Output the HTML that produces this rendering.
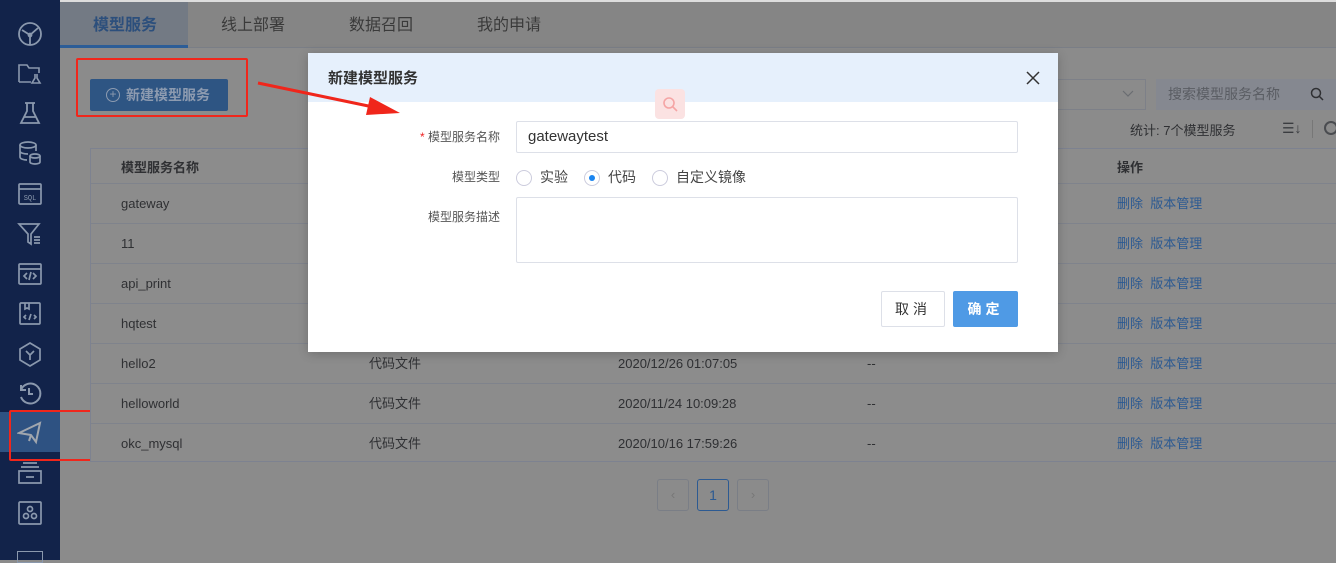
<!DOCTYPE html>
<html><head><meta charset="utf-8"><style>
*{margin:0;padding:0;box-sizing:border-box}
body{width:1336px;height:560px;overflow:hidden;background:#8b8b8b;font-family:"Liberation Sans","Noto Sans CJK SC",sans-serif;position:relative;font-size:13px;color:#2d2f33}
.a{position:absolute}
.side{left:0;top:0;width:60px;height:560px;background:#12234a}
.ic{position:absolute;left:17px;width:26px;height:26px}
.tabs{left:60px;top:2px;width:1276px;height:46px;background:#858585;border-bottom:1px solid #7a7e86}
.tab{position:absolute;top:14px;font-size:16px;line-height:20px;color:#3a3a3a}
.tbl{left:90px;top:148px;width:1246px;height:314px;border:1px solid #7d8290;border-right:none;background:#8c8c8c}
.row{position:absolute;left:0;width:100%;height:40px;border-top:1px solid #7f838c}
.row span{position:absolute;top:12px;font-size:13px;line-height:16px;color:#2f3033}
.op{color:#2c5a92!important}
.modal{left:308px;top:53px;width:750px;height:299px;background:#fff;box-shadow:0 2px 10px rgba(0,0,0,.2)}
.lbl{position:absolute;font-size:12px;line-height:16px;color:#555;text-align:right;width:120px;left:72px}
.radio{position:absolute;top:117px;width:16px;height:16px;border:1px solid #ccd;border-radius:50%}
</style></head><body>
<div class="a side">
<svg class="ic" style="top:21px" viewBox="0 0 26 26" fill="none" stroke="#8a98ad" stroke-width="1.8"><circle cx="13" cy="13" r="11"/><path d="M5 9l8 5 8-7M13 14v10"/><circle cx="13" cy="14" r="1.5" fill="#8a98ad"/></svg>
<svg class="ic" style="top:60px" viewBox="0 0 26 26" fill="none" stroke="#8a98ad" stroke-width="1.6"><path d="M2 22V5h8l2 3h10v5M2 22h12"/><path d="M18 14v4l-3 5h8l-3-5v-4"/></svg>
<svg class="ic" style="top:100px" viewBox="0 0 26 26" fill="none" stroke="#8a98ad" stroke-width="1.8"><path d="M8 3h10M10 3v8L4 23h18l-6-12V3M7 17h12"/></svg>
<svg class="ic" style="top:140px" viewBox="0 0 26 26" fill="none" stroke="#8a98ad" stroke-width="1.7"><ellipse cx="11" cy="5" rx="8" ry="3"/><path d="M3 5v12c0 2 4 3 7 3M19 5v6M3 11c0 2 4 3 8 3"/><ellipse cx="18" cy="16" rx="5" ry="2"/><path d="M13 16v6c0 1 2 2 5 2s5-1 5-2v-6"/></svg>
<svg class="ic" style="top:181px" viewBox="0 0 26 26" fill="none" stroke="#8a98ad" stroke-width="1.7"><rect x="2" y="3" width="22" height="20" rx="1"/><path d="M2 8h22"/><text x="13" y="19" font-size="7" text-anchor="middle" fill="#8a98ad" stroke="none" font-family="Liberation Mono">SQL</text></svg>
<svg class="ic" style="top:221px" viewBox="0 0 26 26" fill="none" stroke="#8a98ad" stroke-width="1.7"><path d="M2 3h20l-8 10v10l-3-2v-8z"/><path d="M17 16h6M17 19h6M17 22h6"/></svg>
<svg class="ic" style="top:261px" viewBox="0 0 26 26" fill="none" stroke="#8a98ad" stroke-width="1.7"><rect x="2" y="3" width="22" height="20" rx="1"/><path d="M2 8h22M10 12l-3 3 3 3M16 12l3 3-3 3M14 11l-2 8"/></svg>
<svg class="ic" style="top:301px" viewBox="0 0 26 26" fill="none" stroke="#8a98ad" stroke-width="1.7"><rect x="3" y="2" width="20" height="21" rx="1"/><path d="M8 2v6l2-1 2 1V2M9 14l-2 2 2 2M17 14l2 2-2 2M14 13l-2 6"/></svg>
<svg class="ic" style="top:341px" viewBox="0 0 26 26" fill="none" stroke="#8a98ad" stroke-width="1.7"><path d="M13 2l10 6v11l-10 6-10-6V8z"/><path d="M9 10l4 4 4-4M13 14v5"/></svg>
<svg class="ic" style="top:380px" viewBox="0 0 26 26" fill="none" stroke="#8a98ad" stroke-width="2"><path d="M4 10a10 10 0 1 1 0 7M4 5v5h5M12 8v6h4"/></svg>
<div class="a" style="left:0;top:412px;width:60px;height:40px;background:#2e5282"></div>
<svg class="ic" style="top:419px" viewBox="0 0 26 26" fill="none" stroke="#a0a6ae" stroke-width="2"><path d="M2 14L23 4l-4 19-5-7zM2 14l12 2M14 16l-2 6"/></svg>
<svg class="ic" style="top:460px" viewBox="0 0 26 26" fill="none" stroke="#8a98ad" stroke-width="1.7"><path d="M6 3h14M4 7h18M2 11h22v12H2zM9 17h8"/></svg>
<svg class="ic" style="top:500px" viewBox="0 0 26 26" fill="none" stroke="#8a98ad" stroke-width="1.7"><rect x="2" y="2" width="22" height="22" rx="1"/><circle cx="13" cy="9" r="2.5"/><circle cx="9" cy="16" r="2.5"/><circle cx="17" cy="16" r="2.5"/></svg>
<div class="a" style="left:17px;top:551px;width:26px;height:12px;border:1.7px solid #8a98ad"></div>
</div>
<div class="a" style="left:60px;top:0;width:1276px;height:2px;background:#ddd"></div>
<div class="a tabs">
<div class="a" style="left:0;top:0;width:128px;height:46px;background:#737a84;border-bottom:3px solid #2c5d97"></div>
<div class="tab" style="left:33px;color:#2c4f7c;font-weight:bold">模型服务</div>
<div class="tab" style="left:161px">线上部署</div>
<div class="tab" style="left:289px">数据召回</div>
<div class="tab" style="left:417px">我的申请</div>
</div>
<div class="a" style="left:90px;top:79px;width:138px;height:32px;background:#2e5583;border-radius:2px;color:#8d9bb0;font-weight:bold;font-size:14px;line-height:32px;padding-left:36px">新建模型服务</div>
<div class="a" style="left:106px;top:88px;width:14px;height:14px;border:1.5px solid #8d9bb0;border-radius:50%;color:#8d9bb0;font-size:12px;line-height:11px;text-align:center">+</div>
<div class="a" style="left:76px;top:58px;width:172px;height:59px;border:2.5px solid #f0261b;border-radius:2px"></div>
<div class="a" style="left:9px;top:410px;width:84px;height:51px;border:2.5px solid #f0261b;border-radius:2px"></div>
<div class="a" style="left:1058px;top:79px;width:88px;height:31px;border:1px solid #7d8088;border-left:none"></div>
<svg class="a" style="left:1122px;top:90px" width="12" height="8" viewBox="0 0 12 8" fill="none" stroke="#6a6d72" stroke-width="1.2"><path d="M1 1l5 5 5-5"/></svg>
<div class="a" style="left:1156px;top:79px;width:180px;height:31px;background:#858890;color:#5a5d63;font-size:14px;line-height:31px;padding-left:12px">搜索模型服务名称</div>
<svg class="a" style="left:1310px;top:87px" width="14" height="14" viewBox="0 0 14 14" fill="none" stroke="#2f3033" stroke-width="1.5"><circle cx="6" cy="6" r="4.5"/><path d="M9.5 9.5L13 13"/></svg>
<div class="a" style="left:1130px;top:120px;font-size:13px;color:#2f3033">统计: 7个模型服务</div>
<div class="a" style="left:1282px;top:120px;font-size:14px;color:#3a3c40">☰↓</div>
<div class="a" style="left:1312px;top:120px;width:1px;height:18px;background:#777"></div>
<div class="a" style="left:1324px;top:121px;width:14px;height:14px;border:2px solid #4a4c50;border-radius:50%"></div>
<div class="a tbl">
<div class="row" style="top:-1px;border:none"><span style="left:30px;font-weight:bold">模型服务名称</span><span style="left:1026px;font-weight:bold">操作</span></div>
<div class="row" style="top:34px"><span style="left:30px">gateway</span><span class="op" style="left:1026px">删除 &nbsp;版本管理</span></div>
<div class="row" style="top:74px"><span style="left:30px">11</span><span class="op" style="left:1026px">删除 &nbsp;版本管理</span></div>
<div class="row" style="top:114px"><span style="left:30px">api_print</span><span class="op" style="left:1026px">删除 &nbsp;版本管理</span></div>
<div class="row" style="top:154px"><span style="left:30px">hqtest</span><span class="op" style="left:1026px">删除 &nbsp;版本管理</span></div>
<div class="row" style="top:194px"><span style="left:30px">hello2</span><span style="left:278px">代码文件</span><span style="left:527px">2020/12/26 01:07:05</span><span style="left:776px">--</span><span class="op" style="left:1026px">删除 &nbsp;版本管理</span></div>
<div class="row" style="top:234px"><span style="left:30px">helloworld</span><span style="left:278px">代码文件</span><span style="left:527px">2020/11/24 10:09:28</span><span style="left:776px">--</span><span class="op" style="left:1026px">删除 &nbsp;版本管理</span></div>
<div class="row" style="top:274px"><span style="left:30px">okc_mysql</span><span style="left:278px">代码文件</span><span style="left:527px">2020/10/16 17:59:26</span><span style="left:776px">--</span><span class="op" style="left:1026px">删除 &nbsp;版本管理</span></div>
</div>
<div class="a" style="left:657px;top:479px;width:32px;height:32px;border:1px solid #7a7e86;border-radius:3px;color:#777;text-align:center;line-height:30px">‹</div>
<div class="a" style="left:697px;top:479px;width:32px;height:32px;border:1px solid #2c5a92;border-radius:3px;color:#2c5a92;text-align:center;line-height:30px;font-size:14px">1</div>
<div class="a" style="left:737px;top:479px;width:32px;height:32px;border:1px solid #7a7e86;border-radius:3px;color:#777;text-align:center;line-height:30px">›</div>
<div class="a modal">
<div class="a" style="left:0;top:0;width:750px;height:49px;background:#e6f0fc"></div>
<div class="a" style="left:20px;top:16px;font-size:15px;line-height:20px;font-weight:bold;color:#333">新建模型服务</div>
<svg class="a" style="left:718px;top:18px" width="14" height="14" viewBox="0 0 14 14" stroke="#333" stroke-width="1.5"><path d="M1 1l12 12M13 1L1 13"/></svg>
<div class="a" style="left:347px;top:36px;width:30px;height:30px;background:#fbe2e2;border-radius:4px"></div>
<svg class="a" style="left:354px;top:43px" width="16" height="16" viewBox="0 0 16 16" fill="none" stroke="#f5a5a5" stroke-width="1.6"><circle cx="7" cy="7" r="5"/><path d="M11 11l4 4"/></svg>
<div class="lbl" style="top:76px"><span style="color:#e22">*</span> 模型服务名称</div>
<div class="a" style="left:208px;top:68px;width:502px;height:32px;border:1px solid #dde0e8;border-radius:2px;font-size:15px;line-height:30px;padding-left:11px;color:#333">gatewaytest</div>
<div class="lbl" style="top:116px">模型类型</div>
<div class="radio" style="left:208px"></div><div class="a" style="left:232px;top:115px;font-size:14px;line-height:18px;color:#444">实验</div>
<div class="radio" style="left:276px"></div><div class="a" style="left:281px;top:122px;width:6px;height:6px;background:#1a84f0;border-radius:50%"></div><div class="a" style="left:300px;top:115px;font-size:14px;line-height:18px;color:#444">代码</div>
<div class="radio" style="left:344px"></div><div class="a" style="left:368px;top:115px;font-size:14px;line-height:18px;color:#444">自定义镜像</div>
<div class="lbl" style="top:156px">模型服务描述</div>
<div class="a" style="left:208px;top:144px;width:502px;height:66px;border:1px solid #dde0e8;border-radius:2px"></div>
<div class="a" style="left:573px;top:238px;width:64px;height:36px;border:1px solid #dde0e8;border-radius:2px;text-align:center;line-height:34px;font-size:14px;color:#333;letter-spacing:4px">取消</div>
<div class="a" style="left:645px;top:238px;width:65px;height:36px;background:#4f9ae5;border-radius:2px;text-align:center;line-height:36px;font-size:14px;color:#fff;font-weight:bold;letter-spacing:4px">确定</div>
</div>
<svg class="a" style="left:250px;top:75px" width="160" height="50" viewBox="0 0 160 50"><path d="M8 8L128 33" stroke="#f0261b" stroke-width="3"/><path d="M150 38L120 22l-4 18z" fill="#f0261b"/></svg>
</body></html>
